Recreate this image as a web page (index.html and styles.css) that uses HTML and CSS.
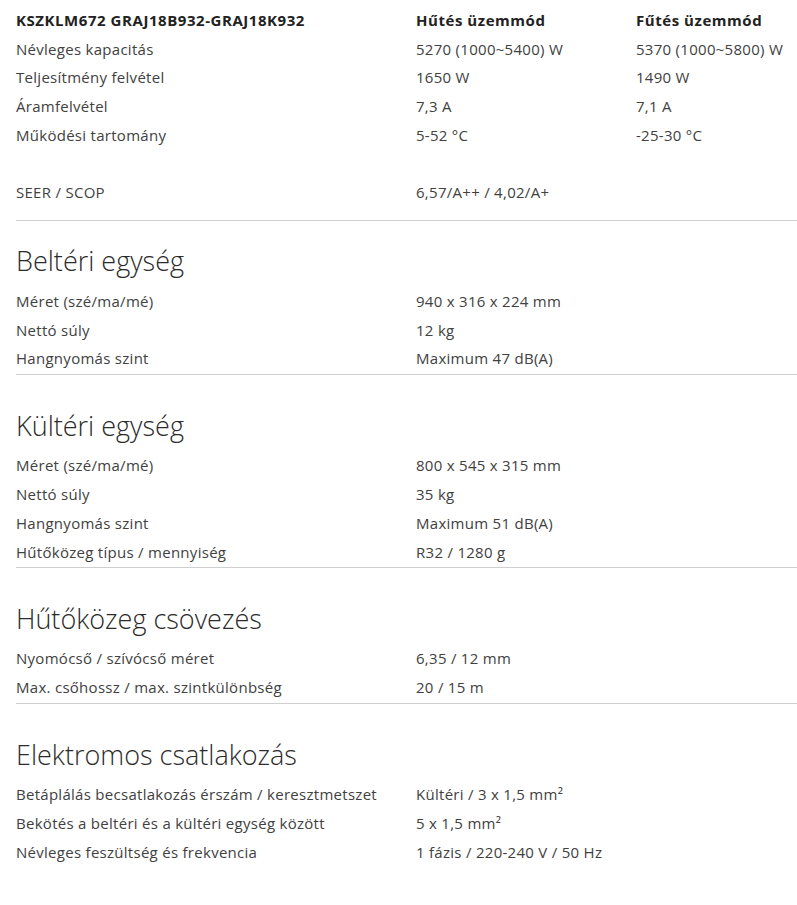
FILE: index.html
```html
<!DOCTYPE html>
<html lang="hu">
<head>
<meta charset="utf-8">
<title>KSZKLM672 specifikáció</title>
<link rel="stylesheet" href="styles.css">
</head>
<body>
<div class="spec">
  <div class="overview">
    <div class="row head">
      <div>KSZKLM672 GRAJ18B932-GRAJ18K932</div>
      <div>Hűtés üzemmód</div>
      <div>Fűtés üzemmód</div>
    </div>
    <div class="row">
      <div>Névleges kapacitás</div>
      <div>5270 (1000~5400) W</div>
      <div>5370 (1000~5800) W</div>
    </div>
    <div class="row">
      <div>Teljesítmény felvétel</div>
      <div>1650 W</div>
      <div>1490 W</div>
    </div>
    <div class="row">
      <div>Áramfelvétel</div>
      <div>7,3 A</div>
      <div>7,1 A</div>
    </div>
    <div class="row">
      <div>Működési tartomány</div>
      <div>5-52 °C</div>
      <div>-25-30 °C</div>
    </div>
    <div class="row empty"></div>
    <div class="row">
      <div>SEER / SCOP</div>
      <div>6,57/A++ / 4,02/A+</div>
      <div></div>
    </div>
  </div>

  <section class="group first">
    <h2 class="title">Beltéri egység</h2>
    <div class="rows">
      <div class="row two"><div>Méret (szé/ma/mé)</div><div>940 x 316 x 224 mm</div></div>
      <div class="row two"><div>Nettó súly</div><div>12 kg</div></div>
      <div class="row two"><div>Hangnyomás szint</div><div>Maximum 47 dB(A)</div></div>
    </div>
  </section>

  <section class="group">
    <h2 class="title">Kültéri egység</h2>
    <div class="rows">
      <div class="row two"><div>Méret (szé/ma/mé)</div><div>800 x 545 x 315 mm</div></div>
      <div class="row two"><div>Nettó súly</div><div>35 kg</div></div>
      <div class="row two"><div>Hangnyomás szint</div><div>Maximum 51 dB(A)</div></div>
      <div class="row two"><div>Hűtőközeg típus / mennyiség</div><div>R32 / 1280 g</div></div>
    </div>
  </section>

  <section class="group">
    <h2 class="title">Hűtőközeg csövezés</h2>
    <div class="rows">
      <div class="row two"><div>Nyomócső / szívócső méret</div><div>6,35 / 12 mm</div></div>
      <div class="row two"><div>Max. csőhossz / max. szintkülönbség</div><div>20 / 15 m</div></div>
    </div>
  </section>

  <section class="group last">
    <h2 class="title">Elektromos csatlakozás</h2>
    <div class="rows">
      <div class="row two"><div>Betáplálás becsatlakozás érszám / keresztmetszet</div><div>Kültéri / 3 x 1,5 mm²</div></div>
      <div class="row two"><div>Bekötés a beltéri és a kültéri egység között</div><div>5 x 1,5 mm²</div></div>
      <div class="row two"><div>Névleges feszültség és frekvencia</div><div>1 fázis / 220-240 V / 50 Hz</div></div>
    </div>
  </section>
</div>
</body>
</html>
```

FILE: styles.css
```css
html, body {
  margin: 0;
  padding: 0;
  background: #ffffff;
}

body {
  font-family: "Open Sans", "Noto Sans", sans-serif;
  font-size: 15px;
  letter-spacing: 0.28px;
  color: #414141;
  overflow-x: hidden;
}

.spec {
  padding: 5.6px 0 40px 16px;
}

.row {
  display: grid;
  grid-template-columns: 400px 220px 1fr;
  height: 28.75px;
  align-items: center;
  white-space: nowrap;
}

.row.two {
  grid-template-columns: 400px 1fr;
}

.row.head {
  font-weight: 700;
  letter-spacing: 0.55px;
  color: #222222;
}

.overview {
  padding-bottom: 13.6px;
  border-bottom: 1px solid #cfcfcf;
}

.group {
  margin-top: 31px;
}

.group.first {
  margin-top: 20px;
}

.title {
  margin: 0 0 5px 0;
  height: 40px;
  line-height: 40px;
  font-size: 27px;
  font-weight: 300;
  letter-spacing: 0;
  color: #2b2b2b;
  white-space: nowrap;
}

.rows {
  padding-bottom: 1.2px;
  border-bottom: 1px solid #cfcfcf;
}

.group.last .rows {
  border-bottom: none;
}
```
